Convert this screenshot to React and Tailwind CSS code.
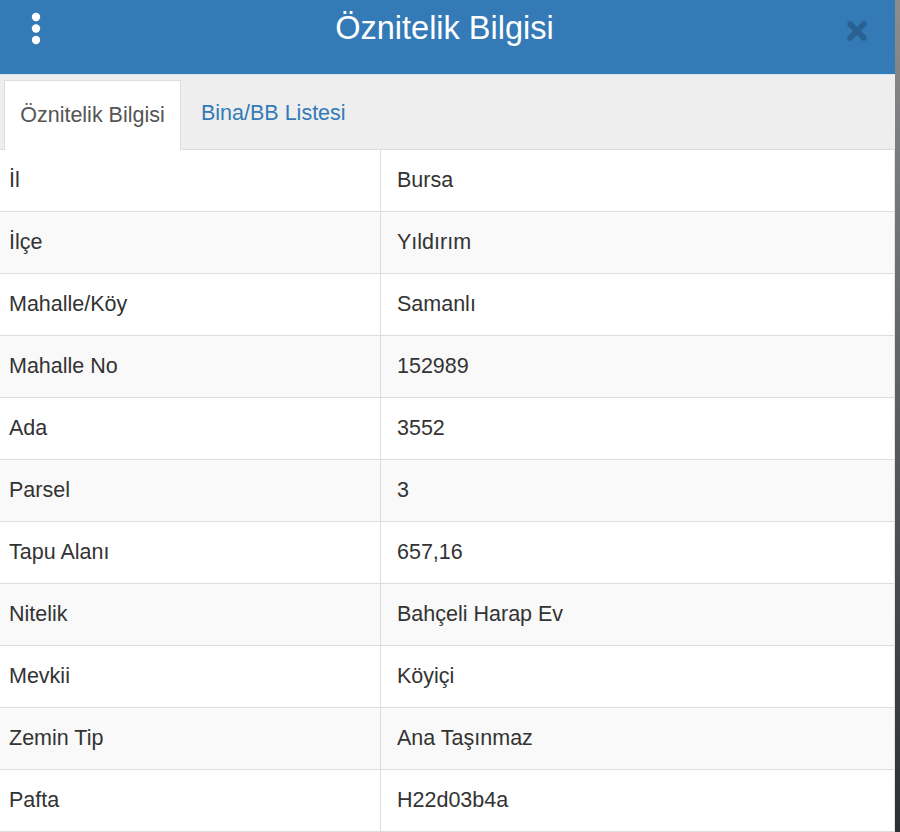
import React from "react";

const rows = [
  ["İl", "Bursa"],
  ["İlçe", "Yıldırım"],
  ["Mahalle/Köy", "Samanlı"],
  ["Mahalle No", "152989"],
  ["Ada", "3552"],
  ["Parsel", "3"],
  ["Tapu Alanı", "657,16"],
  ["Nitelik", "Bahçeli Harap Ev"],
  ["Mevkii", "Köyiçi"],
  ["Zemin Tip", "Ana Taşınmaz"],
  ["Pafta", "H22d03b4a"],
];

export default function App() {
  return (
    <div
      className="w-[900px] h-[832px] overflow-hidden flex bg-white text-[#333]"
      style={{ fontFamily: '"Liberation Sans", Arial, sans-serif' }}
    >
      <div className="w-[895px] flex flex-col">
        {/* Header */}
        <div className="h-[74px] bg-[#337ab7] flex items-start">
          <div className="w-[72px] flex justify-center pt-[12px]">
            <svg width="12" height="34" viewBox="0 0 12 34">
              <circle cx="6" cy="5" r="4.2" fill="#fff" />
              <circle cx="6" cy="16.5" r="4.2" fill="#fff" />
              <circle cx="6" cy="28" r="4.2" fill="#fff" />
            </svg>
          </div>
          <div className="flex-1 text-center text-white text-[32.5px] leading-none pt-[12px] pr-[4px]">
            Öznitelik Bilgisi
          </div>
          <div className="w-[74px] flex justify-center pt-[20px] pr-[2px]">
            <svg width="22" height="22" viewBox="0 0 22 22">
              <path d="M4 4 L18 18 M18 4 L4 18" stroke="#2a5d8c" strokeWidth="5.5" strokeLinecap="round" opacity="0.85" />
            </svg>
          </div>
        </div>
        {/* Tabs */}
        <div className="h-[76px] bg-[#eeeeee] border-t border-[#d3e8f6] border-b border-b-[#dddddd] flex items-end pl-[4px]">
          <div className="h-[70px] w-[177px] bg-white border border-[#dddddd] border-b-0 -mb-[1px] flex items-center justify-center text-[21.5px] text-[#555] pb-[1px]">
            Öznitelik Bilgisi
          </div>
          <div className="h-[70px] flex items-center pl-[20px] text-[21.5px] text-[#337ab7] pb-[1px]">
            Bina/BB Listesi
          </div>
        </div>
        {/* Table */}
        <div className="flex flex-col border-r border-[#e2e2e2]">
          {rows.map(([k, v], i) => (
            <div
              key={k}
              className={`h-[62px] flex border-b border-[#dddddd] text-[21.5px] ${i % 2 === 1 ? "bg-[#f9f9f9]" : "bg-white"}`}
            >
              <div className="w-[381px] border-r border-[#dddddd] flex items-center pl-[9px]">{k}</div>
              <div className="flex-1 flex items-center pl-[16px]">{v}</div>
            </div>
          ))}
        </div>
      </div>
      <div className="w-[5px] bg-gradient-to-b from-[#8d8d8d] via-[#5a5d60] to-[#2b3034]" />
    </div>
  );
}
